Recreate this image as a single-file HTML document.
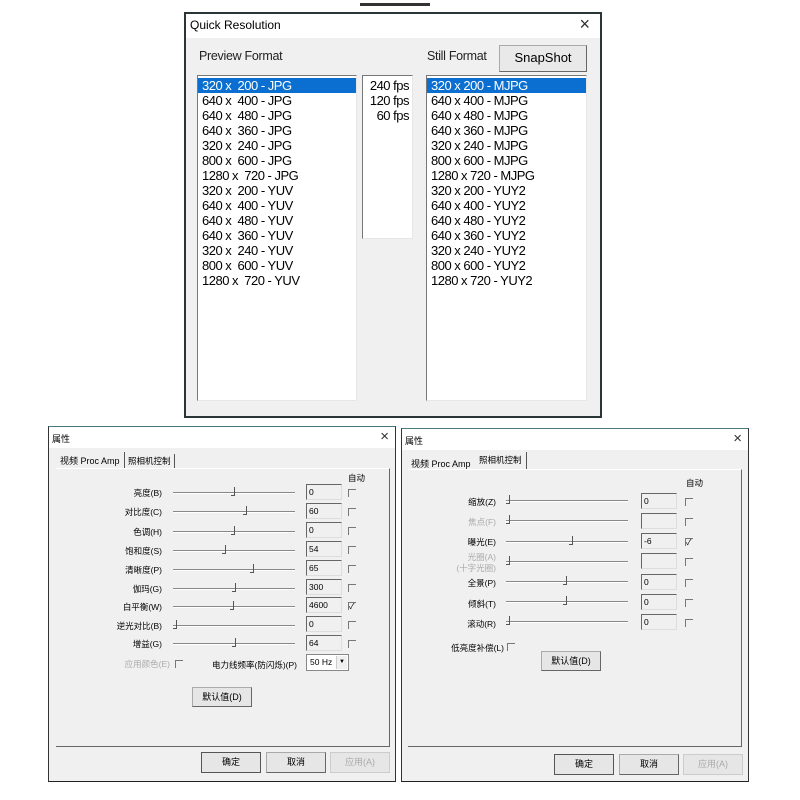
<!DOCTYPE html>
<html><head><meta charset="utf-8"><style>
*{box-sizing:border-box;margin:0;padding:0}
body{width:800px;height:800px;background:#fff;position:relative;overflow:hidden;font-family:"Liberation Sans","Noto Sans CJK SC",sans-serif;color:#000}
.a{position:absolute}
.win{position:absolute;background:#f0f0f0;border:1px solid #3a4a50}
.tb{position:absolute;left:0;right:0;top:0;background:#fff}
.list{position:absolute;background:#fff;border-left:1px solid #777;border-top:1px solid #777;border-right:1px solid #e6e6e6;border-bottom:1px solid #e6e6e6;font-size:13px;line-height:15px;padding-top:2px;letter-spacing:-0.5px}
.list div{padding-left:4px;white-space:nowrap}
.sel{background:#0a6fd0;color:#fff}
.btn{position:absolute;background:#e6e6e6;border:1px solid #aaa;border-right-color:#666;border-bottom-color:#666;text-align:center;font-size:9px}
.lbl{position:absolute;font-size:8.5px;text-align:right;white-space:nowrap}
.g{color:#aaa}
.tr{position:absolute;height:2px;border-top:1px solid #888;border-bottom:1px solid #fff}
.th{position:absolute;width:4px;height:9px;border-right:1px solid #555;border-bottom:1px solid #555}
.ed{position:absolute;width:36px;height:16px;border-left:1px solid #666;border-top:1px solid #666;border-right:1px solid #ddd;border-bottom:1px solid #ddd;font-size:8.5px;padding:2px 2px;background:#f0f0f0}
.cb{position:absolute;width:8px;height:8px;border-left:1px solid #777;border-top:1px solid #777;font-size:8px;line-height:7px}
</style></head><body>
<div class="a" style="left:360px;top:3px;width:70px;height:3px;background:#333"></div>

<div class="win" style="left:184px;top:12px;width:418px;height:406px;border:2px solid #2a3538">
 <div class="tb" style="height:24px;font-size:12px;padding:4px 4px">Quick Resolution</div>
 <div class="a" style="right:10px;top:0px;font-size:18px;color:#333;font-weight:300">×</div>
</div>
<div class="a" style="left:199px;top:49px;font-size:12.5px;color:#222;letter-spacing:-0.3px">Preview Format</div>
<div class="a" style="left:427px;top:49px;font-size:12.5px;color:#222;letter-spacing:-0.3px">Still Format</div>
<div class="btn" style="left:499px;top:45px;width:88px;height:27px;font-size:13px;line-height:24px;background:#e9e9e9">SnapShot</div>
<div class="list" style="left:197px;top:75px;width:160px;height:326px">
<div class="sel">320 x &nbsp;200 - JPG</div><div>640 x &nbsp;400 - JPG</div><div>640 x &nbsp;480 - JPG</div><div>640 x &nbsp;360 - JPG</div><div>320 x &nbsp;240 - JPG</div><div>800 x &nbsp;600 - JPG</div><div>1280 x &nbsp;720 - JPG</div><div>320 x &nbsp;200 - YUV</div><div>640 x &nbsp;400 - YUV</div><div>640 x &nbsp;480 - YUV</div><div>640 x &nbsp;360 - YUV</div><div>320 x &nbsp;240 - YUV</div><div>800 x &nbsp;600 - YUV</div><div>1280 x &nbsp;720 - YUV</div>
</div>
<div class="list" style="left:362px;top:75px;width:51px;height:164px;text-align:right">
<div style="padding-right:3px">240 fps</div><div style="padding-right:3px">120 fps</div><div style="padding-right:3px">60 fps</div>
</div>
<div class="list" style="left:426px;top:75px;width:161px;height:326px">
<div class="sel">320 x 200 - MJPG</div><div>640 x 400 - MJPG</div><div>640 x 480 - MJPG</div><div>640 x 360 - MJPG</div><div>320 x 240 - MJPG</div><div>800 x 600 - MJPG</div><div>1280 x 720 - MJPG</div><div>320 x 200 - YUY2</div><div>640 x 400 - YUY2</div><div>640 x 480 - YUY2</div><div>640 x 360 - YUY2</div><div>320 x 240 - YUY2</div><div>800 x 600 - YUY2</div><div>1280 x 720 - YUY2</div>
</div>

<div class="win" style="left:48px;top:426px;width:348px;height:356px;border-color:#4a7a80 #333 #222 #333">
 <div class="tb" style="height:21px;font-size:9px;padding:5px 3px">属性</div>
 <div class="a" style="right:6px;top:1px;font-size:15px;color:#333">×</div>
</div>
<div class="a" style="left:56px;top:452px;font-size:9px;padding:2px 4px;height:16px;border-right:1px solid #555;background:#f0f0f0">视频 Proc Amp</div>
<div class="a" style="left:125px;top:454px;font-size:8.5px;padding:1px 3px;border-right:1px solid #555">照相机控制</div>
<div class="a" style="left:56px;top:468px;width:334px;height:279px;border-right:1px solid #666;border-bottom:1px solid #666;border-top:1px solid #fff"></div>
<div class="a" style="left:348px;top:472px;font-size:8.5px">自动</div>

<div class="lbl" style="right:638px;top:487px">亮度(B)</div><div class="tr" style="left:173px;top:492px;width:122px"></div><div class="th" style="left:231px;top:487px"></div><div class="ed" style="left:306px;top:484px">0</div><div class="cb" style="left:348px;top:489px"></div>
<div class="lbl" style="right:638px;top:506px">对比度(C)</div><div class="tr" style="left:173px;top:511px;width:122px"></div><div class="th" style="left:243px;top:506px"></div><div class="ed" style="left:306px;top:503px">60</div><div class="cb" style="left:348px;top:508px"></div>
<div class="lbl" style="right:638px;top:526px">色调(H)</div><div class="tr" style="left:173px;top:531px;width:122px"></div><div class="th" style="left:231px;top:526px"></div><div class="ed" style="left:306px;top:522px">0</div><div class="cb" style="left:348px;top:527px"></div>
<div class="lbl" style="right:638px;top:545px">饱和度(S)</div><div class="tr" style="left:173px;top:550px;width:122px"></div><div class="th" style="left:222px;top:545px"></div><div class="ed" style="left:306px;top:541px">54</div><div class="cb" style="left:348px;top:546px"></div>
<div class="lbl" style="right:638px;top:564px">清晰度(P)</div><div class="tr" style="left:173px;top:569px;width:122px"></div><div class="th" style="left:250px;top:564px"></div><div class="ed" style="left:306px;top:560px">65</div><div class="cb" style="left:348px;top:565px"></div>
<div class="lbl" style="right:638px;top:583px">伽玛(G)</div><div class="tr" style="left:173px;top:588px;width:122px"></div><div class="th" style="left:232px;top:583px"></div><div class="ed" style="left:306px;top:579px">300</div><div class="cb" style="left:348px;top:584px"></div>
<div class="lbl" style="right:638px;top:601px">白平衡(W)</div><div class="tr" style="left:173px;top:606px;width:122px"></div><div class="th" style="left:230px;top:601px"></div><div class="ed" style="left:306px;top:597px">4600</div><div class="cb" style="left:348px;top:602px">✓</div>
<div class="lbl" style="right:638px;top:620px">逆光对比(B)</div><div class="tr" style="left:173px;top:625px;width:122px"></div><div class="th" style="left:173px;top:620px"></div><div class="ed" style="left:306px;top:616px">0</div><div class="cb" style="left:348px;top:621px"></div>
<div class="lbl" style="right:638px;top:638px">增益(G)</div><div class="tr" style="left:173px;top:643px;width:122px"></div><div class="th" style="left:232px;top:638px"></div><div class="ed" style="left:306px;top:635px">64</div><div class="cb" style="left:348px;top:640px"></div>
<div class="lbl g" style="right:630px;top:658px">应用颜色(E)</div><div class="cb" style="left:175px;top:660px"></div>
<div class="lbl" style="right:503px;top:659px">电力线频率(防闪烁)(P)</div>
<div class="a" style="left:306px;top:654px;width:43px;height:17px;background:#fff;border:1px solid #888;font-size:8.5px;padding:2px 3px">50 Hz<span style="position:absolute;right:1px;top:1px;width:11px;height:13px;background:#f0f0f0;border-left:1px solid #ccc;font-size:6px;text-align:center;line-height:13px">▼</span></div>
<div class="btn" style="left:192px;top:687px;width:60px;height:20px;line-height:18px">默认值(D)</div>
<div class="btn" style="left:201px;top:752px;width:60px;height:21px;line-height:19px;border-color:#555">确定</div>
<div class="btn" style="left:266px;top:752px;width:60px;height:21px;line-height:19px">取消</div>
<div class="btn g" style="left:330px;top:752px;width:60px;height:21px;line-height:19px;border-color:#ccc">应用(A)</div>

<div class="win" style="left:401px;top:428px;width:348px;height:354px;border-color:#4a7a80 #333 #222 #333">
 <div class="tb" style="height:21px;font-size:9px;padding:5px 3px">属性</div>
 <div class="a" style="right:6px;top:1px;font-size:15px;color:#333">×</div>
</div>
<div class="a" style="left:408px;top:456px;font-size:9px;padding:1px 3px">视频 Proc Amp</div>
<div class="a" style="left:475px;top:452px;font-size:8.5px;padding:2px 4px;height:17px;border-right:1px solid #555;background:#f0f0f0">照相机控制</div>
<div class="a" style="left:408px;top:469px;width:334px;height:278px;border-right:1px solid #666;border-bottom:1px solid #666;border-top:1px solid #fff"></div>
<div class="a" style="left:686px;top:477px;font-size:8.5px">自动</div>

<div class="lbl" style="right:304px;top:496px">缩放(Z)</div><div class="tr" style="left:506px;top:500px;width:122px"></div><div class="th" style="left:506px;top:495px"></div><div class="ed" style="left:641px;top:493px">0</div><div class="cb" style="left:685px;top:498px"></div>
<div class="lbl g" style="right:304px;top:516px">焦点(F)</div><div class="tr" style="left:506px;top:520px;width:122px"></div><div class="th" style="left:506px;top:515px"></div><div class="ed" style="left:641px;top:513px"></div><div class="cb" style="left:685px;top:518px"></div>
<div class="lbl" style="right:304px;top:536px">曝光(E)</div><div class="tr" style="left:506px;top:541px;width:122px"></div><div class="th" style="left:569px;top:536px"></div><div class="ed" style="left:641px;top:533px">-6</div><div class="cb" style="left:685px;top:538px">✓</div>
<div class="lbl g" style="right:304px;top:552px;line-height:11px">光圈(A)<br>(十字光圈)</div><div class="tr" style="left:506px;top:561px;width:122px"></div><div class="th" style="left:506px;top:556px"></div><div class="ed" style="left:641px;top:553px"></div><div class="cb" style="left:685px;top:558px"></div>
<div class="lbl" style="right:304px;top:577px">全景(P)</div><div class="tr" style="left:506px;top:581px;width:122px"></div><div class="th" style="left:563px;top:576px"></div><div class="ed" style="left:641px;top:574px">0</div><div class="cb" style="left:685px;top:579px"></div>
<div class="lbl" style="right:304px;top:598px">倾斜(T)</div><div class="tr" style="left:506px;top:601px;width:122px"></div><div class="th" style="left:563px;top:596px"></div><div class="ed" style="left:641px;top:594px">0</div><div class="cb" style="left:685px;top:599px"></div>
<div class="lbl" style="right:304px;top:618px">滚动(R)</div><div class="tr" style="left:506px;top:621px;width:122px"></div><div class="th" style="left:506px;top:616px"></div><div class="ed" style="left:641px;top:614px">0</div><div class="cb" style="left:685px;top:619px"></div>
<div class="lbl" style="right:296px;top:642px">低亮度补偿(L)</div><div class="cb" style="left:507px;top:643px"></div>
<div class="btn" style="left:541px;top:651px;width:60px;height:20px;line-height:18px">默认值(D)</div>
<div class="btn" style="left:554px;top:754px;width:60px;height:21px;line-height:19px;border-color:#555">确定</div>
<div class="btn" style="left:619px;top:754px;width:60px;height:21px;line-height:19px">取消</div>
<div class="btn g" style="left:683px;top:754px;width:60px;height:21px;line-height:19px;border-color:#ccc">应用(A)</div>
</body></html>
